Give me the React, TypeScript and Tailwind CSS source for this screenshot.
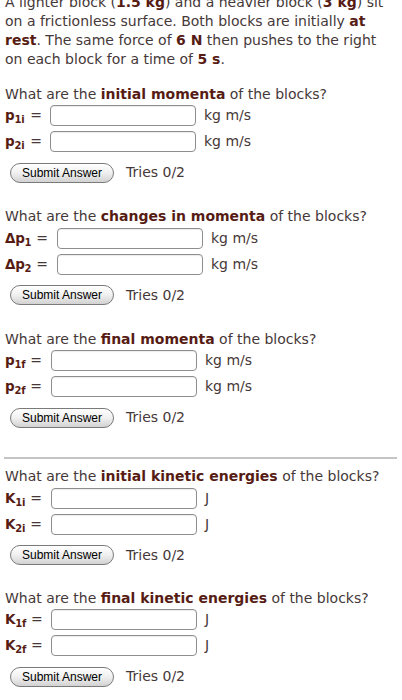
import React from "react";

const TXT = "text-[#463838]";
const BOLD = "font-bold text-[#561c14]";

function Sym({ base, sub, delta }: { base: string; sub: string; delta?: boolean }) {
  return (
    <span className={`${BOLD} text-[13.5px] whitespace-nowrap tracking-[-0.3px]`}>
      {delta ? "Δ" : ""}
      {base}
      <span className="text-[10px] relative top-[3px] tracking-[-0.2px]">{sub}</span>
    </span>
  );
}

function Row({
  base,
  sub,
  delta,
  unit,
  labelW,
}: {
  base: string;
  sub: string;
  delta?: boolean;
  unit: string;
  labelW: string;
}) {
  return (
    <div className="flex items-center h-[22px]">
      <div className={`flex items-center justify-between gap-[5px] ${labelW}`}>
        <Sym base={base} sub={sub} delta={delta} />
        <span className={`${TXT} text-[14px]`}>=</span>
      </div>
      <div className="w-[146px] h-[21px] border border-[#8e8e8e] rounded-[4px] bg-white shadow-[inset_0_1px_1px_rgba(0,0,0,0.08)]" />
      <span className={`${TXT} ml-[8px] text-[14px]`}>{unit}</span>
    </div>
  );
}

function Submit() {
  return (
    <div className="flex items-center h-[20px] mt-[10px] pl-[5px]">
      <div
        className="h-[20px] w-[104px] rounded-full border border-[#7a7a7a] bg-gradient-to-b from-[#ffffff] via-[#f0f0f0] to-[#d2d2d2] flex items-center justify-center text-[12px] text-black"
        style={{ fontFamily: '"Liberation Sans", Arial, sans-serif' }}
      >
        Submit Answer
      </div>
      <span className={`${TXT} ml-[12px] text-[14px]`}>Tries 0/2</span>
    </div>
  );
}

function Section({
  q1,
  bold,
  rows,
  unit,
  labelW,
  className,
}: {
  q1: string;
  bold: string;
  rows: { base: string; sub: string; delta?: boolean }[];
  unit: string;
  labelW: string;
  className?: string;
}) {
  return (
    <div className={className}>
      <div className={`${TXT} h-[19px] leading-[19px] text-[14px]`}>
        {q1}
        <span className={BOLD}>{bold}</span> of the blocks?
      </div>
      <div className="mt-[1px]">
        <Row {...rows[0]} unit={unit} labelW={labelW} />
      </div>
      <div className="mt-[4px]">
        <Row {...rows[1]} unit={unit} labelW={labelW} />
      </div>
      <Submit />
    </div>
  );
}

export default function App() {
  return (
    <div
      className="w-[402px] h-[700px] overflow-hidden bg-white pl-[5px]"
      style={{ fontFamily: '"DejaVu Sans", Verdana, sans-serif' }}
    >
      <p className={`${TXT} text-[14px] leading-[19px] mt-[-7px] pr-[4px]`}>
        A lighter block (<span className={BOLD}>1.5 kg</span>) and a heavier block (
        <span className={BOLD}>3 kg</span>) sit on a frictionless surface. Both blocks are initially{" "}
        <span className={BOLD}>at rest</span>. The same force of <span className={BOLD}>6 N</span> then
        pushes to the right on each block for a time of <span className={BOLD}>5 s</span>.
      </p>
      <Section
        className="mt-[15.5px]"
        q1="What are the "
        bold="initial momenta"
        rows={[
          { base: "p", sub: "1i" },
          { base: "p", sub: "2i" },
        ]}
        unit="kg m/s"
        labelW="w-[45px] pr-[8px]"
      />
      <Section
        className="mt-[24.5px]"
        q1="What are the "
        bold="changes in momenta"
        rows={[
          { base: "p", sub: "1", delta: true },
          { base: "p", sub: "2", delta: true },
        ]}
        unit="kg m/s"
        labelW="w-[52px] pr-[10px]"
      />
      <Section
        className="mt-[24.5px]"
        q1="What are the "
        bold="final momenta"
        rows={[
          { base: "p", sub: "1f" },
          { base: "p", sub: "2f" },
        ]}
        unit="kg m/s"
        labelW="w-[46px] pr-[9px]"
      />
      <div className="mt-[29px] mr-[5px] ml-[-1px] h-[2px] bg-[#c4c4c4]" />
      <Section
        className="mt-[8.5px]"
        q1="What are the "
        bold="initial kinetic energies"
        rows={[
          { base: "K", sub: "1i" },
          { base: "K", sub: "2i" },
        ]}
        unit="J"
        labelW="w-[46px] pr-[9px]"
      />
      <Section
        className="mt-[23.5px]"
        q1="What are the "
        bold="final kinetic energies"
        rows={[
          { base: "K", sub: "1f" },
          { base: "K", sub: "2f" },
        ]}
        unit="J"
        labelW="w-[46px] pr-[9px]"
      />
    </div>
  );
}
